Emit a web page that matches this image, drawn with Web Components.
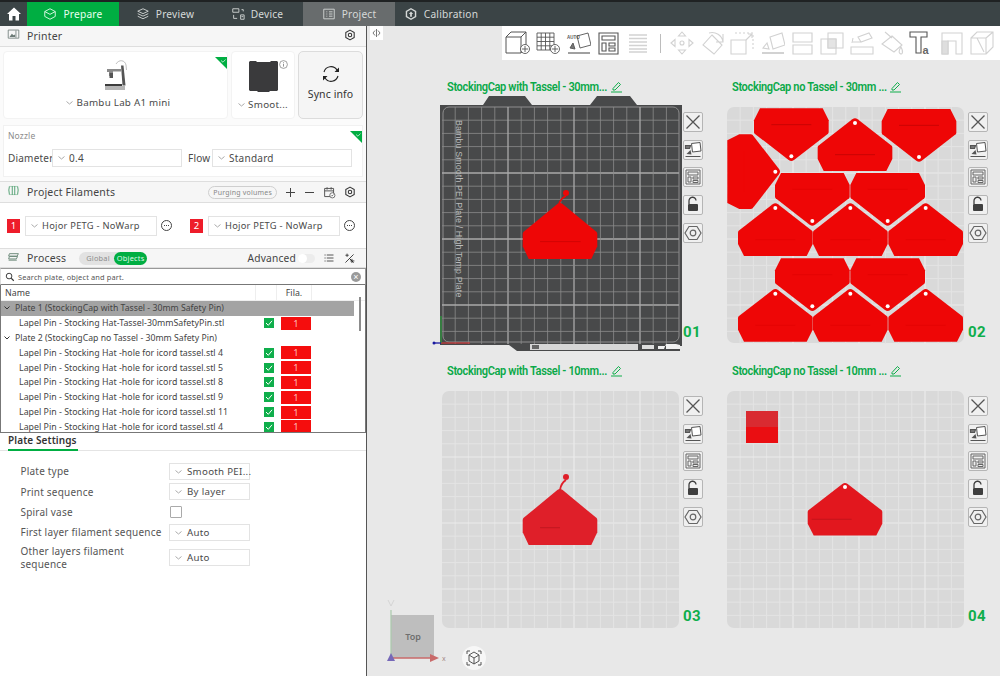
<!DOCTYPE html>
<html>
<head>
<meta charset="utf-8">
<title>Project</title>
<style>
    html, body { margin: 0; height: 100%; background: #e8e8e8; }
    body { font-family: "Noto Sans", Roboto, sans-serif; overflow: hidden; }
</style>
</head>
<body>
<slicer-app></slicer-app>

<script>
const GREEN = "#00ae42";

const ICONS = {
    home: `<path d="M1 8 8 1.5 15 8h-2v6.5H9.5V10h-3v4.5H3V8z" fill="#fff"/>`,
    prepare: `<path d="M8 2l6 3.2v5.6L8 14l-6-3.2V5.2zM2 5.2 8 8.4l6-3.2" fill="none" stroke="currentColor"/>`,
    preview: `<path d="M8 2l6 2.8L8 7.6 2 4.8zM2 7.6l6 2.8 6-2.8M2 10.6l6 2.8 6-2.8" fill="none" stroke="currentColor"/>`,
    device: `<path d="M2 2h7v4H2zM3 9v4h4M12 3h2v2M11 9h4v5h-4zM12 11h2" fill="none" stroke="currentColor"/>`,
    project: `<path d="M2 2.5h12v11H2zM5 5.5h1M8 5.5h4M5 8h1M8 8h4M5 10.5h1M8 10.5h4" fill="none" stroke="currentColor"/>`,
    calibration: `<path d="M8 2l5.2 3v6L8 14l-5.2-3V5z" fill="none" stroke="currentColor" stroke-width="1.6"/><path d="M8 5.2 10.4 8H9v3H7V8H5.6z" fill="currentColor"/>`,
    printer: `<path d="M1.5 2.5h13v10h-13z" fill="none" stroke="#6c7a76"/><path d="M3 11l3-4 2 2 2-1v3z" fill="#6c7a76"/><path d="M11 3v9" stroke="#6c7a76"/>`,
    gear: `<path d="M8 1.5l5.6 3.2v6.6L8 14.5l-5.6-3.2V4.700z" fill="none" stroke="#333" stroke-width="1.400" stroke-linejoin="round"/><circle cx="8" cy="8" r="2.300" fill="none" stroke="#333" stroke-width="1.400"/>`,
    filaments: `<path d="M3 3c-1 3-1 7 0 10M6.500 2.500v11M9.500 2.500v11M13 3c1 3 1 7 0 10" fill="none" stroke="#5fa77d" stroke-width="1.300"/><path d="M3 3h10M3 13h10" stroke="#5fa77d" stroke-width=".6"/>`,
    process: `<path d="M3 4.500h11l-1.500 3H2zM3 8h10l-1.500 3H2zM2 12.500h10" fill="none" stroke="#6f8c7c" stroke-width="1.200"/>`,
    search: `<circle cx="6.500" cy="6.500" r="4.500" fill="none" stroke="#333" stroke-width="1.500"/><path d="M10 10l4 4" stroke="#333" stroke-width="1.800"/>`,
    list: `<path d="M2 4h1.500M5 4h9M2 8h1.500M5 8h9M2 12h1.500M5 12h9" stroke="#444" stroke-width="1.200"/>`,
    wand: `<path d="M3 13 13 3M3 4h4M5 2v4M9 11h5M11 8.500v5" stroke="#444" stroke-width="1.200"/><path d="M8 8l5 5" stroke="#2a2a2a" stroke-width="1.200"/>`,
    flush: `<path d="M2 3h11v10H2zM2 6h11M5 1.500v3M10 1.500v3" fill="none" stroke="#555" stroke-width="1.200"/><circle cx="11.500" cy="11.500" r="3.200" fill="#fff" stroke="#555"/><path d="M10 11.500l1 1 2-2" fill="none" stroke="#555"/>`
};

function icon(name, size = 14, extra = "") {
    return `<svg width="${size}" height="${size}" viewBox="0 0 16 16" ${extra}>${ICONS[name]}</svg>`;
}

// --- top tabs ---------------------------------------------------------------
class TopBar extends HTMLElement {
    connectedCallback() {
        const tabs = [
            ["prepare", "Prepare", 92, "on"],
            ["preview", "Preview", 92, ""],
            ["device", "Device", 92, ""],
            ["project", "Project", 92, "sel"],
            ["calibration", "Calibration", 92, ""]
        ];
        this.attachShadow({ mode: "open" });
        this.shadowRoot.innerHTML = `
            <style>
                :host { display: flex; height: 24px; background: #3b4446; border-top: 2px solid #1f2223; color: #d6d9d8; font-size: 10.200px; }
                .home { width: 27px; display: flex; align-items: center; justify-content: center; }
                .tab { display: flex; align-items: center; justify-content: center; gap: 6px; letter-spacing: .2px; }
                .on { background: ${GREEN}; color: #e8fff0; }
                .sel { background: #686c6d; }
            </style>
            <div class="home">${icon("home", 16)}</div>
            ${tabs.map(t => `<div class="tab ${t[3]}" style="width:${t[2]}px">${icon(t[0], 14)}<span>${t[1]}</span></div>`).join("")}
        `;
    }
}

// --- generic section header of the left panel -------------------------------
class SectionHead extends HTMLElement {
    connectedCallback() {
        this.attachShadow({ mode: "open" });
        this.shadowRoot.innerHTML = `
            <style>
                :host { display: flex; align-items: center; gap: 7px; padding: 0 10px 0 7px; background: #f6f6f6; border-top: 1px solid #dedede; border-bottom: 1px solid #dedede; font-size: 10.500px; color: #444; box-sizing: border-box; letter-spacing: .2px; }
                .right { margin-left: auto; display: flex; align-items: center; gap: 8px; }
            </style>
            <slot name="icon"></slot>
            <slot></slot>
            <div class="right"><slot name="right"></slot></div>
        `;
    }
}

// --- drop down box ----------------------------------------------------------
class DropBox extends HTMLElement {
    connectedCallback() {
        this.attachShadow({ mode: "open" });
        this.shadowRoot.innerHTML = `
            <style>
                :host { display: flex; align-items: center; box-sizing: border-box; height: 17px; border: 1px solid #e3e3e3; background: #fff; padding-left: 5px; gap: 4px; font-size: 9.500px; color: #4a4a4a; letter-spacing: .25px; white-space: nowrap; }
                :host([plain]) { border-color: transparent; background: none; justify-content: center; }
                svg { flex: none; }
            </style>
            <svg width="7" height="4" viewBox="0 0 7 4"><path d="M.5.500 3.500 3 6.500.500" fill="none" stroke="#aaa"/></svg>
            <slot></slot>
        `;
    }
}

// --- little green corner mark -----------------------------------------------
class CornerMark extends HTMLElement {
    connectedCallback() {
        this.attachShadow({ mode: "open" });
        this.shadowRoot.innerHTML = `
            <style>
                :host { position: absolute; top: 0; right: 0; width: 12px; height: 12px; display: block; }
            </style>
            <svg width="12" height="12" viewBox="0 0 12 12"><path d="M0 0h12v12z" fill="${GREEN}"/><path d="M6 3.500 8 5.200 10.500 2.500" fill="none" stroke="#cfeedd" stroke-width=".8"/></svg>
        `;
    }
}

// --- printer + nozzle -------------------------------------------------------
class PrinterSection extends HTMLElement {
    connectedCallback() {
        this.attachShadow({ mode: "open" });
        this.shadowRoot.innerHTML = `
            <style>
                :host { display: block; background: #fbfbfb; }
                section-head { height: 21px; border-top: 0; }
                .row { display: flex; gap: 3px; padding: 4px 3px 0 3px; height: 72px; box-sizing: border-box; }
                .card { position: relative; background: #fff; border: 1px solid #f3f3f3; border-radius: 4px; display: flex; flex-direction: column; align-items: center; box-sizing: border-box; }
                .p { width: 225px; padding-top: 7px; gap: 2px; }
                .b { width: 64px; padding-top: 9px; gap: 2px; }
                .i { position: absolute; top: 8px; right: 6px; }
                .sync { width: 65px; background: #f5f5f5; border: 1px solid #dcdcdc; border-radius: 5px; display: flex; flex-direction: column; align-items: center; justify-content: center; gap: 4px; font-size: 10.500px; color: #333; letter-spacing: .1px; padding-bottom: 4px; box-sizing: border-box; }
                .nozzle { position: relative; margin: 6px 3px 4px 3px; height: 52px; background: #fff; border: 1px solid #f1f1f1; box-sizing: border-box; padding: 0 4px; }
                .nozzle small { display: block; font-size: 8.500px; color: #8b8b8b; height: 20px; line-height: 20px; margin-bottom: 3px; letter-spacing: .15px; }
                .f { display: flex; align-items: center; font-size: 10px; color: #4a4a4a; letter-spacing: .2px; }
                .f drop-box { height: 18px; }
            </style>
            <section-head><span slot="icon">${icon("printer", 13)}</span>Printer<span slot="right">${icon("gear", 12)}</span></section-head>
            <div class="row">
                <div class="card p">
                    <corner-mark></corner-mark>
                    <svg width="26" height="33" viewBox="0 0 26 33">
                        <path d="M13 5c3-5 9-4 10 1l.5 5" fill="none" stroke="#a5a5a5" stroke-width=".7"/>
                        <path d="M18 6.500h2.500l2 20h-3z" fill="#555"/>
                        <path d="M4 10h14v2.500H10v4.500H6v-4H4z" fill="#8a8a8a"/>
                        <rect x="6.500" y="14" width="3.500" height="5" fill="#555"/>
                        <path d="M2 27h20v4H2z" fill="#b5b5b5"/><path d="M2 25h17v2H2z" fill="#3d3d3d"/>
                    </svg>
                    <drop-box plain style="font-size:9.800px">Bambu Lab A1 mini</drop-box>
                </div>
                <div class="card b">
                    <svg class="i" width="9" height="9" viewBox="0 0 9 9"><circle cx="4.500" cy="4.500" r="3.900" fill="none" stroke="#777" stroke-width=".7"/><path d="M4.500 4v2.600M4.500 2.300v1" stroke="#777" stroke-width=".8"/></svg>
                    <svg width="29" height="31" viewBox="0 0 29 31"><path d="M1 0h6l1 1h13l1-1h6l1 1v28l-1 1H21l-1 1H9l-1-1H1l-1-1V1z" fill="#3a3a3c"/></svg>
                    <drop-box plain style="font-size:9.800px;gap:3px;padding-left:0;margin-top:2px">Smoot...</drop-box>
                </div>
                <div class="sync">
                    <svg width="20" height="18" viewBox="0 0 20 18"><path d="M3 7a7.200 7.200 0 0 1 13-2M17 11A7.200 7.200 0 0 1 4 13" fill="none" stroke="#222" stroke-width="1.100"/><path d="M18 2.500 18 7 13.500 7z M2 15.500 2 11 6.500 11z" fill="#222"/></svg>
                    <span>Sync info</span>
                </div>
            </div>
            <div class="nozzle">
                <corner-mark></corner-mark>
                <small>Nozzle</small>
                <div class="f">
                    <span style="width:44px">Diameter</span>
                    <drop-box style="width:130px;font-size:10px">0.4</drop-box>
                    <span style="margin-left:6px;width:24px">Flow</span>
                    <drop-box style="width:140px;font-size:10px">Standard</drop-box>
                </div>
            </div>
        `;
    }
}

// --- project filaments ------------------------------------------------------
class FilamentSection extends HTMLElement {
    connectedCallback() {
        const dots = `<svg width="13" height="13" viewBox="0 0 13 13"><circle cx="6.500" cy="6.500" r="5" fill="none" stroke="#444"/><path d="M4 6.500h1M6 6.500h1M8 6.500h1" stroke="#444"/></svg>`;
        const slot = (n, mr) => `
            <span class="n">${n}</span>
            <drop-box style="width:132px;height:20px;margin-left:5px;font-size:9.300px;gap:4px">Hojor PETG - NoWarp</drop-box>
            <span style="margin-left:3px;margin-right:${mr}px;display:flex">${dots}</span>`;
        this.attachShadow({ mode: "open" });
        this.shadowRoot.innerHTML = `
            <style>
                :host { display: block; background: #fff; }
                section-head { height: 22px; }
                .row { display: flex; align-items: center; height: 45px; padding: 0 0 0 7px; box-sizing: border-box; }
                .n { width: 13px; height: 14px; background: #ee1c2a; color: #fff; font-size: 9.500px; line-height: 14px; text-align: center; }
                .pill { border: 1px solid #cfcfcf; border-radius: 8px; padding: 0 4px; font-size: 7px; color: #888; height: 11px; line-height: 11px; display: block; white-space: nowrap; }
                .plus { font-size: 0; display: flex; }
            </style>
            <section-head>
                <span slot="icon">${icon("filaments", 13)}</span>Project Filaments
                <span slot="right" class="pill">Purging volumes</span>
                <span slot="right" class="plus"><svg width="11" height="11" viewBox="0 0 11 11"><path d="M1 5.500h9M5.500 1v9" stroke="#444"/></svg></span>
                <span slot="right" class="plus"><svg width="11" height="11" viewBox="0 0 11 11"><path d="M1 5.500h9" stroke="#444"/></svg></span>
                <span slot="right" class="plus">${icon("flush", 13)}</span>
                <span slot="right" class="plus">${icon("gear", 12)}</span>
            </section-head>
            <div class="row">${slot(1, 17)}${slot(2, 0)}</div>
        `;
    }
}

// --- process head and search ------------------------------------------------
class ProcessSection extends HTMLElement {
    connectedCallback() {
        this.attachShadow({ mode: "open" });
        this.shadowRoot.innerHTML = `
            <style>
                :host { display: block; background: #fff; }
                section-head { height: 20px; }
                .seg { display: flex; align-items: center; background: #e2e2e2; border-radius: 7px; height: 13px; font-size: 7.400px; color: #8d8d8d; margin-left: 6px; padding-left: 7px; }
                .seg b { font-weight: 400; background: ${GREEN}; color: #dff8e8; border-radius: 7px; height: 13px; line-height: 13px; padding: 0 3px; margin-left: 4px; }
                .tog { display: block; width: 17px; height: 9px; background: #ececec; border-radius: 5px; position: relative; margin-left: -6px; }
                .tog::before { content: ""; position: absolute; left: 0; top: 0; width: 9px; height: 9px; border-radius: 50%; background: #fff; }
                .adv { color: #444; font-size: 10.200px; }
                .s { display: flex; align-items: center; gap: 3px; height: 17px; box-sizing: border-box; padding: 0 4px 0 4px; border: 1px solid #999; border-bottom: 1px solid #777; border-left: 1px solid #ddd; font-size: 7.400px; color: #555; letter-spacing: .15px; width: 366px; }
                .s i { margin-left: auto; width: 10px; height: 10px; border-radius: 50%; background: #9a9a9a; color: #fff; font: 400 9px/10px "Liberation Sans", sans-serif; text-align: center; }
            </style>
            <section-head>
                <span slot="icon">${icon("process", 13)}</span>Process
                <div class="seg">Global<b>Objects</b></div>
                <span slot="right" class="adv">Advanced</span>
                <span slot="right" class="tog"></span>
                <span slot="right" style="display:flex">${icon("list", 12)}</span>
                <span slot="right" style="display:flex">${icon("wand", 13)}</span>
            </section-head>
            <div class="s">${icon("search", 10)}<span>Search plate, object and part.</span><i>&times;</i></div>
        `;
    }
}

// --- object table -----------------------------------------------------------
class ObjectTable extends HTMLElement {
    connectedCallback() {
        const hat = "Lapel Pin - Stocking Hat -hole for icord tassel.stl ";
        const item = name => `
            <div class="r item"><span class="nm">${name}</span>
                <svg class="ck" width="10" height="10" viewBox="0 0 10 10"><rect width="10" height="10" fill="#0fae4b"/><path d="M2 5 4.300 7.300 8 2.800" fill="none" stroke="#fff" stroke-width="1"/></svg>
                <span class="fi">1</span></div>`;
        const plate = (name, sel) => `
            <div class="r plate ${sel ? "sel" : ""}">
                <svg width="6" height="4" viewBox="0 0 6 4"><path d="M.5.500 3 3 5.500.500" fill="none" stroke="#333"/></svg>
                <span>${name}</span></div>`;
        this.attachShadow({ mode: "open" });
        this.shadowRoot.innerHTML = `
            <style>
                :host { display: block; position: relative; height: 147px; width: 366px; box-sizing: border-box; border: 1px solid #777; border-width: 0 1px; background: #fff; overflow: hidden; font-size: 8.800px; color: #444; letter-spacing: .02px; }
                .head { display: flex; align-items: center; height: 16px; padding-left: 4px; border-bottom: 1px solid #eee; box-sizing: border-box; }
                .head s { margin-left: auto; width: 20px; height: 16px; border-left: 1px solid #eee; }
                .head em { font-style: normal; margin-right: 53px; width: 34px; text-align: center; border-left: 1px solid #eee; border-right: 1px solid #eee; line-height: 16px; }
                .r { display: flex; align-items: center; height: 14.800px; white-space: nowrap; width: 353px; box-sizing: border-box; }
                .plate { padding-left: 3px; gap: 5px; font-size: 8.680px; }
                .sel { background: #a3a3a3; }
                .item { padding-left: 18px; position: relative; }
                .ck { position: absolute; left: 263px; top: 2.500px; }
                .fi { position: absolute; left: 280px; top: 1px; width: 30px; height: 13px; background: #f50d0d; color: #ffb9b9; text-align: center; line-height: 13px; font-size: 9.500px; }
                .bar { position: absolute; right: 4px; top: 12px; width: 2px; height: 34px; background: #8c8c8c; }
            </style>
            <div class="head"><span>Name</span><s></s><em>Fila.</em></div>
            ${plate("Plate 1 (StockingCap with Tassel - 30mm Safety Pin)", true)}
            ${item("Lapel Pin - Stocking Hat-Tassel-30mmSafetyPin.stl")}
            ${plate("Plate 2 (StockingCap no Tassel - 30mm Safety Pin)", false)}
            ${[4, 5, 8, 9, 11, 4].map(n => item(hat + n)).join("")}
            <div class="bar"></div>
        `;
    }
}

// --- plate settings ---------------------------------------------------------
class PlateSettings extends HTMLElement {
    connectedCallback() {
        this.attachShadow({ mode: "open" });
        this.shadowRoot.innerHTML = `
            <style>
                :host { display: block; flex: 1; background: #fff; font-size: 10px; color: #555; letter-spacing: .2px; border-top: 1px solid #777; }
                .tab { height: 18px; border-bottom: 1px solid #e4e4e4; box-sizing: border-box; padding: 0 0 0 8px; }
                .tab b { display: inline-block; height: 16px; width: 70px; border-bottom: 2px solid ${GREEN}; box-sizing: content-box; font-weight: 600; font-size: 10px; color: #333; letter-spacing: .1px; line-height: 14px; white-space: nowrap; }
                .grid { display: grid; grid-template-columns: 148.500px 81px; grid-auto-rows: 17px; align-items: center; padding: 12px 0 0 20.500px; row-gap: 3.400px; }
                .grid span { line-height: 12.500px; }
                .grid .tall { margin-top: 9px; white-space: nowrap; }
                .grid drop-box { font-size: 9.700px; letter-spacing: .3px; padding-left: 5px; gap: 5px; height: 17px; }
                .cb { width: 10px; height: 10px; border: 1px solid #aaa; border-radius: 1px; background: #fff; margin: 0 0 0 1px; }
            </style>
            <div class="tab"><b>Plate Settings</b></div>
            <div class="grid">
                <span>Plate type</span><drop-box>Smooth PEI...</drop-box>
                <span>Print sequence</span><drop-box>By layer</drop-box>
                <span>Spiral vase</span><div class="cb"></div>
                <span>First layer filament sequence</span><drop-box>Auto</drop-box>
                <span class="tall">Other layers filament<br>sequence</span><drop-box style="margin-top:9px">Auto</drop-box>
            </div>
        `;
    }
}

// --- toolbar ----------------------------------------------------------------
class CanvasToolbar extends HTMLElement {
    connectedCallback() {
        const dark = "#555", pale = "#d2d2d2";
        const add = (x, y) => `<circle cx="${x}" cy="${y}" r="4.500" fill="#fff" stroke="${dark}" stroke-width=".9"/><path d="M${x - 3} ${y}h6M${x} ${y - 3}v6" stroke="${dark}" stroke-width=".9"/>`;
        const items = [
            `<g fill="none" stroke="${dark}"><path d="M1 7h15v16H1zM1 7l5-5h15v15l-5 6M16 7l5-5"/></g>${add(20, 19)}`,
            `<g fill="none" stroke="${dark}" stroke-width=".9"><path d="M2 3h17v17H2zM6.200 3v17M10.500 3v17M14.800 3v17M2 7.200h17M2 11.500h17M2 15.800h17"/></g>${add(20, 19)}`,
            `<g fill="none" stroke="${dark}" stroke-width=".9"><path d="M12 6 23 3l3 12-11 3z"/><path d="M3 23h22" stroke-width="1.600" stroke="#888"/><path d="M8 13l-3 5 5 1z" fill="#777"/></g><text x="2" y="9" font-size="4.500" font-weight="700" fill="#555" font-family="Liberation Sans, sans-serif">AUTO</text>`,
            `<g fill="none" stroke="${dark}" stroke-width="1.100"><path d="M4 3h19v21H4zM7 6h13v4H7zM7 13h4v8H7zM14 13h6v3h-6zM14 18h6v3h-6z"/></g>`,
            `<g fill="none" stroke="${pale}" stroke-width="1.500"><path d="M4 5h18M4 8.500h18M4 12h18M4 15.500h18M4 19h18M4 22h18"/></g>`,
            null,
            `<g fill="none" stroke="${pale}" stroke-width="1.100"><path d="M13 2l3.500 4h-7zM13 24l3.500-4h-7zM2 13l4-3.500v7zM24 13l-4-3.500v7z"/><circle cx="13" cy="13" r="2"/></g>`,
            `<g fill="none" stroke="${pale}" stroke-width="1.100"><path d="M13 5l10 10-8 9-11-9zM10 3a11 11 0 0 1 14 9M24 4v8h-7"/></g>`,
            `<g fill="none" stroke="${pale}" stroke-width="1.100"><path d="M2 10h15v14H2z"/><path d="M6 3h18v16" stroke-dasharray="2 2"/><path d="M17 10l6-6M19 4h4v4"/></g>`,
            `<g fill="none" stroke="${pale}" stroke-width="1.100"><path d="M11 7 23 3l3 12-12 4z"/><path d="M3 23h22" stroke-width="2"/><path d="M8 13l-4 5 6 1z"/></g>`,
            `<g fill="none" stroke="${pale}" stroke-width="1.200"><path d="M4 3h19v9H4zM4 15h19v9H4z"/></g>`,
            `<g fill="none" stroke="${pale}" stroke-width="1.100"><path d="M2 9h15v15H2zM9 3h15v15H9z"/><path d="M9 9h8v9H9z" fill="#e4e4e4"/></g>`,
            `<g fill="none" stroke="${pale}" stroke-width="1.100"><path d="M2 17h22v7H2zM4 12h8M4 8l-1 5M9 7l11-4 3 5-11 4z"/></g>`,
            `<g fill="none" stroke="${pale}" stroke-width="1.100"><path d="M13 6l10 9-8 7-12-8zM6 2l7 6M22 17c-2 3-3 5-1 6.500s4-1 1-6.500z"/></g>`,
            `<g fill="none" stroke="#555" stroke-width="1.100"><path d="M1 2h17v5h-6v16H7V7H1z"/></g><text x="13.500" y="24" font-size="11" font-weight="700" fill="#666" font-family="Liberation Sans, sans-serif">a</text>`,
            `<g fill="none" stroke="${pale}" stroke-width="1.100"><path d="M3 3h20v21h-6V11H9v13H3z"/><path d="M3 11h6v13H3z" fill="#dedede"/></g>`,
            `<g fill="none" stroke="${pale}" stroke-width="1.100"><path d="M2 8h15v16H2zM2 8l6-6h16v15l-7 7M17 8l7-6M8 8l7 14"/></g>`
        ];
        this.attachShadow({ mode: "open" });
        this.shadowRoot.innerHTML = `
            <style>
                :host { position: absolute; top: 0; right: 0; left: 135px; height: 34px; background: #fff; display: flex; align-items: center; padding-left: 1px; }
                .b { width: 30px; display: flex; justify-content: center; }
                .sep { width: 14px; display: flex; justify-content: center; }
                .sep::before { content: ""; width: 1px; height: 19px; background: #bcbcbc; }
            </style>
            ${items.map(i => i === null ? `<div class="sep"></div>` : `<div class="b"><svg width="26" height="26" viewBox="0 0 26 26">${i}</svg></div>`).join("")}
        `;
    }
}

// --- hats drawn on a plate ---------------------------------------------------
const HAT = "M-8 3Q0 -3 8 3L110 82Q112 84 112 88L112 122 94 158 -94 158 -112 122 -112 88Q-112 84 -110 82Z";

function hat(transform, lineColor = "#dc0303", fill = "#ee0606") {
    return `<g transform="${transform}">
        <path d="${HAT}" fill="${fill}"/>
        <circle cx="0" cy="14" r="6" fill="#fff"/>
        <path d="M-60 109H60" stroke="${lineColor}" stroke-width="1.500"/>
    </g>`;
}

function gridLines(size, step, thin, thick, thinW, thickW) {
    let out = "";
    for (let i = 1; i * step < size; i++) {
        const p = (i * step).toFixed(1);
        const major = i % 5 === 0;
        const st = `stroke="${major ? thick : thin}" stroke-width="${major ? thickW : thinW}"`;
        out += `<path d="M${p} 0V${size}M0 ${p}H${size}" ${st}/>`;
    }
    return out;
}

const LIGHT_GRID = gridLines(237, 13.2, "#e4e4e4", "#ebebeb", 1, 1.200);

const PLATES = {
    dark: `
        <path d="M-2 -2H41L47 -11H83L90 -2H148L155 -11H188L195 -2H240V239H238L238 244H75L67 238H-2Z" fill="#48494a"/>
        <rect x="1" y="0" width="236" height="235" rx="6" fill="none" stroke="#8e8e8e"/>
        ${gridLines(237, 13.200, "#8c8c8c", "#a9a9a9", .8, 1.300)}
        <text transform="translate(14,13) rotate(90)" font-size="8.800" fill="#bcbcbc" font-family="Liberation Sans, sans-serif" letter-spacing=".15">Bambu Smooth PEI Plate / High Temp Plate</text>
        <rect x="88" y="237" width="108" height="6" fill="#d6d6d6"/>
        <rect x="90" y="238" width="7" height="4" fill="#666"/>
        <rect x="200" y="238" width="12" height="4" fill="#ddd"/>
        <path d="M222 242 224 237H234L238 238V242ZM216 242H224V239H216Z" fill="#f1f1f1"/>
        <path d="M-1 236H28" stroke="#c83a3a" stroke-width="1.300"/>
        <path d="M-1 236V209" stroke="#2d9a3d" stroke-width="1.300"/>
        <path d="M-9 236H-1" stroke="#1a1aa0" stroke-width="1.300"/>
        <circle cx="-8" cy="236" r="1.500" fill="#1a1aa0"/>
        <path d="M117 97Q119 91 124 89" stroke="#ee0606" stroke-width="1.800" fill="none"/>
        <circle cx="124" cy="86" r="3" fill="#ee0606"/>
        <g transform="translate(118,96) scale(.333,.354)"><path d="${HAT}" fill="#ee0606"/><path d="M-60 109H62" stroke="#b80000" stroke-width="1.500"/></g>
    `,
    many: `
        <rect width="237" height="236" rx="7" fill="#d9d9d9"/>${LIGHT_GRID}
        <svg x="0" y="0" width="237" height="236" viewBox="21 96 711 708">
            ${hat("translate(214,258) scale(1,-1)", "#a80000")}
            ${hat("translate(405,130)", "#a80000")}
            ${hat("translate(597,260) scale(1,-1)", "#a80000")}
            ${hat("translate(180,290) rotate(90)", "#ee0606")}
            ${hat("translate(277,452) scale(1,-1)")}
            ${hat("translate(503,452) scale(1,-1)")}
            ${hat("translate(166,385)")}
            ${hat("translate(391,385)")}
            ${hat("translate(617,385)")}
            ${hat("translate(277,708) scale(1,-1)")}
            ${hat("translate(503,708) scale(1,-1)")}
            ${hat("translate(166,642)")}
            ${hat("translate(391,642)")}
            ${hat("translate(617,642)")}
        </svg>
    `,
    tassel: `
        <rect width="237" height="237" rx="7" fill="#d9d9d9"/>${LIGHT_GRID}
        <path d="M118 99Q119 92 124 89" stroke="#df1f29" stroke-width="1.800" fill="none"/>
        <circle cx="124" cy="86" r="3" fill="#df1f29"/>
        <g transform="translate(118,98) scale(.333,.355)"><path d="${HAT}" fill="#df1f29"/><path d="M-60 109H0" stroke="#a81018" stroke-width="1.500"/></g>
    `,
    square: `
        <rect width="237" height="237" rx="7" fill="#d9d9d9"/>${LIGHT_GRID}
        <rect x="19" y="20" width="32" height="16" fill="#d92b31"/>
        <rect x="19" y="36" width="32" height="16" fill="#ea0e12"/>
        <g transform="translate(118,92) scale(.333)"><path d="${HAT}" fill="#e2171e"/><circle cx="0" cy="12" r="6" fill="#fff"/><path d="M-100 109H20" stroke="#a81018" stroke-width="1.500"/></g>
    `
};

// --- one plate with its title and buttons -----------------------------------
class PlateCard extends HTMLElement {
    connectedCallback() {
        const buttons = [
            `<path d="M3.500 3.500 16.500 16.500M16.500 3.500 3.500 16.500" stroke="#555" stroke-width="1.300"/>`,
            `<path d="M8.500 3.500 17 2.500l1 8.500-8.500 1z" fill="#fff" stroke="#555"/><path d="M2.500 5.500h5l-1 3h-4zM2.500 16.500h15" stroke="#555" fill="#777" stroke-width="1.200"/><path d="M7.500 10l-4 4 5 .5z" fill="#555"/>`,
            `<path d="M3 3h14v14H3zM5 5h10v3H5zM5 10h3v5H5zM10 10h5v2h-5zM10 13.500h5v2h-5z" fill="none" stroke="#666"/>`,
            `<path d="M6 9V6a3.500 3.500 0 0 1 7-.500" fill="none" stroke="#3f3f3f" stroke-width="1.300"/><rect x="5" y="9" width="10" height="7" rx="1" fill="#3f3f3f"/>`,
            `<path d="M6 3.500h8l4 6.500-4 6.500H6L2 10z" fill="none" stroke="#666" stroke-width="1.200"/><circle cx="10" cy="10" r="2.800" fill="none" stroke="#666" stroke-width="1.200"/>`
        ];
        this.attachShadow({ mode: "open" });
        this.shadowRoot.innerHTML = `
            <style>
                :host { display: block; font-family: Roboto, sans-serif; }
                .t { display: flex; align-items: center; gap: 3px; height: 20px; margin-bottom: 11px; padding-left: 5px; color: #0aa948; font-size: 13px; font-weight: 600; letter-spacing: -.42px; white-space: nowrap; }
                .t span { display: inline-block; transform: scaleX(.85); transform-origin: left center; margin-right: -28px; }
                .b { display: flex; gap: 4px; height: 237px; }
                .p { overflow: visible; display: block; }
                .side { display: flex; flex-direction: column; padding: 5px 0 4px 0; gap: 7.700px; width: 20px; }
                .btn { width: 20px; height: 20px; box-sizing: border-box; border: 1px solid #b5b5b5; border-radius: 2px; background: #f0f0f0; flex: none; }
                .btn svg { display: block; margin: -1px; }
                .num { margin-top: auto; color: #0fae4b; font-size: 15px; font-weight: 700; line-height: 15px; letter-spacing: .3px; }
            </style>
            <div class="t"><span>${this.getAttribute("title")}</span>
                <svg width="13" height="13" viewBox="0 0 13 13"><path d="M3 8.500 8.500 2.500 10.500 4.500 5 10H3zM1 12H12" fill="none" stroke="#0fae4b" stroke-width="1"/></svg>
            </div>
            <div class="b">
                <svg class="p" width="237" height="237" viewBox="0 0 237 237">${PLATES[this.getAttribute("kind")]}</svg>
                <div class="side">
                    ${buttons.map(b => `<div class="btn"><svg width="20" height="20" viewBox="0 0 20 20">${b}</svg></div>`).join("")}
                    <div class="num">${this.getAttribute("num")}</div>
                </div>
            </div>
        `;
    }
}

// --- navigation cube --------------------------------------------------------
class NavCube extends HTMLElement {
    connectedCallback() {
        this.attachShadow({ mode: "open" });
        this.shadowRoot.innerHTML = `
            <style>
                :host { position: absolute; left: 17px; top: 572px; width: 120px; height: 76px; display: block; font-family: "Noto Sans", sans-serif; }
            </style>
            <svg width="120" height="76" viewBox="0 0 120 76">
                <rect x="7" y="17" width="43" height="43" fill="#bebebe"/>
                <path d="M7 60V12" stroke="#a9c9ab" stroke-width="1.200"/>
                <path d="M4 2 7 8 10 2" fill="none" stroke="#ccc" stroke-width=".7"/>
                <path d="M7 60H50" stroke="#c96a6a" stroke-width="1.500"/>
                <path d="M46 56 55 60 46 64z" fill="#c96a6a"/>
                <path d="M3 63 7 55 11 63z" fill="#7668b8"/>
                <text x="29" y="42" font-size="9" font-weight="600" fill="#6f6f6f" text-anchor="middle">Top</text>
                <text x="58" y="63" font-size="7" fill="#a58a8a">x</text>
                <circle cx="90" cy="60" r="12" fill="#f7f7f7"/>
                <path d="M90 54l5 3v6l-5 3-5-3v-6zM85 57l5 3 5-3M90 60v6" fill="none" stroke="#555" stroke-width="1"/>
                <path d="M83 56v-3h3M94 53h3v3M97 64v3h-3M86 67h-3v-3" fill="none" stroke="#555" stroke-width="1"/>
            </svg>
        `;
    }
}

// --- whole window -----------------------------------------------------------
class SlicerApp extends HTMLElement {
    connectedCallback() {
        this.attachShadow({ mode: "open" });
        this.shadowRoot.innerHTML = `
            <style>
                :host { display: flex; flex-direction: column; width: 1000px; height: 676px; overflow: hidden; }
                .main { flex: 1; display: flex; min-height: 0; }
                .left { width: 366px; display: flex; flex-direction: column; border-right: 1px solid #555; background: #fff; }
                .canvas { position: relative; flex: 1; background: #e8e8e8; padding: 50px 0 0 75px; box-sizing: border-box; display: grid; grid-template-columns: 285px 285px; grid-auto-rows: 284px; }
                .chip { position: absolute; left: 3px; top: 0; width: 13px; height: 14px; background: #fff; display: flex; align-items: center; justify-content: center; }
            </style>
            <top-bar></top-bar>
            <div class="main">
                <div class="left">
                    <printer-section></printer-section>
                    <filament-section></filament-section>
                    <process-section></process-section>
                    <object-table></object-table>
                    <plate-settings></plate-settings>
                </div>
                <div class="canvas">
                    <div class="chip"><svg width="9" height="8" viewBox="0 0 9 8"><path d="M4.500 0v8M3 1.500 1 4l2 2.500M6 1.500 8 4 6 6.500" fill="none" stroke="#555" stroke-width=".8"/></svg></div>
                    <canvas-toolbar></canvas-toolbar>
                    <plate-card kind="dark" num="01" title="StockingCap with Tassel - 30mm..."></plate-card>
                    <plate-card kind="many" num="02" title="StockingCap no Tassel - 30mm ..."></plate-card>
                    <plate-card kind="tassel" num="03" title="StockingCap with Tassel - 10mm..."></plate-card>
                    <plate-card kind="square" num="04" title="StockingCap no Tassel - 10mm ..."></plate-card>
                    <nav-cube></nav-cube>
                </div>
            </div>
        `;
    }
}

customElements.define("top-bar", TopBar);
customElements.define("section-head", SectionHead);
customElements.define("drop-box", DropBox);
customElements.define("corner-mark", CornerMark);
customElements.define("printer-section", PrinterSection);
customElements.define("filament-section", FilamentSection);
customElements.define("process-section", ProcessSection);
customElements.define("object-table", ObjectTable);
customElements.define("plate-settings", PlateSettings);
customElements.define("canvas-toolbar", CanvasToolbar);
customElements.define("plate-card", PlateCard);
customElements.define("nav-cube", NavCube);
customElements.define("slicer-app", SlicerApp);
</script>
</body>
</html>
